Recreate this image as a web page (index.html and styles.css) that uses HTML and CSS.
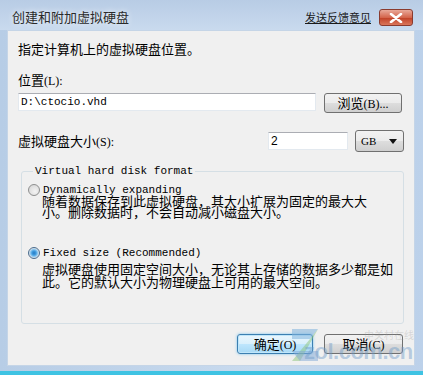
FILE: index.html
```html
<!DOCTYPE html>
<html lang="zh-CN">
<head>
    <meta charset="UTF-8" />
    <title>创建和附加虚拟硬盘</title>
    <link rel="stylesheet" href="styles.css">
</head>
<body>
    <div class="ventana">
        <div class="barra">
            <span class="titulo">创建和附加虚拟硬盘</span>
            <a class="opinion">发送反馈意见</a>
            <span class="cerrar">
                <svg width="14" height="10" viewBox="0 0 14 10">
                    <path d="M2 1 L12 9 M12 1 L2 9" stroke="#fff" stroke-width="2.6" stroke-linecap="round"/>
                </svg>
            </span>
        </div>

        <div class="cliente">
            <p class="intro">指定计算机上的虚拟硬盘位置。</p>

            <label class="etiqueta" for="ruta">位置<span class="tecla">(L):</span></label>
            <div class="fila-ruta">
                <div class="caja ruta" id="ruta">D:\ctocio.vhd</div>
                <button class="boton examinar">浏览<span class="tecla">(B)...</span></button>
            </div>

            <div class="fila-tamano">
                <span class="etiqueta">虚拟硬盘大小<span class="tecla">(S):</span></span>
                <div class="caja tamano">2</div>
                <div class="combo">
                    <span class="tecla">GB</span>
                    <svg width="8" height="5" viewBox="0 0 8 5"><path d="M0 0 H8 L4 5 Z" fill="#111"/></svg>
                </div>
            </div>

            <fieldset class="grupo">
                <legend>Virtual hard disk format</legend>
                <div class="opcion"><span class="radio"></span>Dynamically expanding</div>
                <p class="desc uno">随着数据保存到此虚拟硬盘，其大小扩展为固定的最大大<br>小。删除数据时，不会自动减小磁盘大小。</p>
                <div class="opcion segunda"><span class="radio marcado"></span>Fixed size (Recommended)</div>
                <p class="desc dos">虚拟硬盘使用固定空间大小，无论其上存储的数据多少都是如<br>此。它的默认大小为物理硬盘上可用的最大空间。</p>
            </fieldset>

            <div class="acciones">
                <button class="boton principal">确定<span class="tecla">(O)</span></button>
                <button class="boton cancelar">取消<span class="tecla">(C)</span></button>
            </div>
        </div>

        <div class="marca">
            <svg class="logo-z" width="30" height="36" viewBox="0 0 30 36">
                <polygon points="2,2 28,2 20,12 2,12" fill="#7fb2dd" opacity="0.55"/>
                <polygon points="20,12 28,2 10,34 2,34" fill="#8cc47a" opacity="0.5"/>
                <polygon points="2,24 28,24 28,34 10,34" fill="#7fa8d6" opacity="0.5"/>
            </svg>
            <span class="marca-cn">中关村在线</span>
            <span class="marca-url">zol.com.cn</span>
        </div>
    </div>
</body>
</html>
```

FILE: styles.css
```css
body {
    margin: 0;
    padding: 0;
    font-family: "Noto Sans CJK SC", sans-serif;
    font-size: 13px;
    color: #000;
}

.ventana {
    position: relative;
    width: 423px;
    height: 375px;
    box-sizing: border-box;
    display: flex;
    flex-direction: column;
    background: linear-gradient(to right, #b7cde6, #c8daee 60%, #bcd1ea);
    padding-bottom: 5px;
    border-bottom: 4px solid #3fc3e3;
    overflow: hidden;
}

/* barra de titulo */
.barra {
    height: 30px;
    display: flex;
    align-items: flex-start;
    padding: 9px 10px 0 12px;
    box-sizing: border-box;
    background: linear-gradient(to bottom, #b8cce5, #c9daee);
}
.titulo {
    flex: 1;
    line-height: 16px;
    color: #2a2a2a;
    text-shadow: 0 0 6px #fff;
}
.opinion {
    font-size: 11px;
    line-height: 16px;
    margin-right: 8px;
    color: #1a1a1a;
    text-decoration: underline;
}
.cerrar {
    width: 34px;
    height: 17px;
    box-sizing: border-box;
    border: 1px solid #8a3b2f;
    border-radius: 3px;
    background: linear-gradient(to bottom, #e9a99a, #d4654c 50%, #c2442a 55%, #d9765b);
    display: flex;
    justify-content: center;
    align-items: center;
}

/* area de cliente */
.cliente {
    flex: 1;
    margin: 0 8px 0 7px;
    background: #f0f0f0;
    border: 1px solid #c5d5e7;
    padding: 10px 11px 0 10px;
    box-sizing: border-box;
}
.intro {
    margin: 0;
    line-height: 16px;
}
.etiqueta {
    display: block;
    margin-top: 15px;
    line-height: 16px;
}
.tecla {
    font-family: "Liberation Serif", "Noto Sans CJK SC", serif;
    font-size: 12px;
}

.fila-ruta {
    display: flex;
    align-items: flex-start;
    gap: 8px;
    margin-top: 4px;
    margin-right: 1px;
}
.caja {
    height: 18px;
    box-sizing: border-box;
    background: #fff;
    border: 1px solid #e3e9ef;
    border-top-color: #abadb3;
    line-height: 16px;
    padding-left: 2px;
}
.ruta {
    width: 299px;
    font-family: "Liberation Mono", monospace;
    font-size: 11px;
}
.boton {
    height: 20px;
    padding: 0;
    box-sizing: border-box;
    border: 1px solid #707070;
    border-radius: 3px;
    background: linear-gradient(to bottom, #f2f2f2, #ebebeb 50%, #dddddd 51%, #cfcfcf);
    font-family: "Noto Sans CJK SC", sans-serif;
    font-size: 13px;
    line-height: 17px;
    color: #000;
}
.examinar {
    width: 78px;
}

.fila-tamano {
    display: flex;
    align-items: center;
    height: 22px;
    margin-top: 17px;
    margin-right: -1px;
}
.fila-tamano .etiqueta {
    flex: 1;
    margin: 0;
}
.tamano {
    width: 80px;
    margin-right: 7px;
    font-family: "Liberation Sans", sans-serif;
    font-size: 12px;
}
.combo {
    width: 49px;
    height: 22px;
    box-sizing: border-box;
    border: 1px solid #707070;
    border-radius: 3px;
    background: linear-gradient(to bottom, #f2f2f2, #ebebeb 50%, #dddddd 51%, #cfcfcf);
    display: flex;
    justify-content: space-between;
    align-items: center;
    padding: 0 6px 0 5px;
}
.combo .tecla {
    font-size: 11px;
}

/* grupo de formato */
.grupo {
    margin: 12px 0 0 3px;
    width: 383px;
    box-sizing: border-box;
    border: 1px solid #d5dfe5;
    border-radius: 3px;
    padding: 5px 0 35px 6px;
    min-width: 0;
}
.grupo legend {
    margin-left: 5px;
    padding: 0 2px;
    font-family: "Liberation Mono", monospace;
    font-size: 11px;
    line-height: 14px;
}
.opcion {
    display: flex;
    align-items: center;
    height: 14px;
    font-family: "Liberation Mono", monospace;
    font-size: 11px;
}
.segunda {
    margin-top: 29px;
}
.radio {
    width: 12px;
    height: 12px;
    box-sizing: border-box;
    border-radius: 50%;
    border: 1px solid #8e8f8f;
    background: radial-gradient(circle at 60% 65%, #f4f4f4, #d2d2d2);
    margin-right: 3px;
}
.radio.marcado {
    border-color: #4b6c8d;
    background: radial-gradient(circle, #2b7ac0 0, #3d9be0 2px, #a2d1f2 4px, #e8e8e8 5px);
}
.desc {
    margin: 0 0 0 14px;
}
.desc.uno {
    margin-top: -2px;
    line-height: 11px;
}
.desc.dos {
    margin-top: 2px;
    line-height: 13px;
}

.acciones {
    display: flex;
    justify-content: flex-end;
    gap: 11px;
    margin-top: 10px;
}
.principal {
    width: 76px;
    border-color: #3c7fb1;
    background: linear-gradient(to bottom, #eaf6fd, #d9f0fc 50%, #bee6fd 51%, #a7d9f5);
    box-shadow: 0 0 3px #7ac4ee, inset 0 0 0 1px #c0e6fa;
}
.cancelar {
    width: 79px;
}

/* marca de agua */
.marca {
    position: absolute;
    right: 0;
    bottom: 6px;
    width: 135px;
    height: 40px;
    pointer-events: none;
}
.logo-z {
    position: absolute;
    left: 2px;
    top: 2px;
}
.marca-cn {
    position: absolute;
    left: 76px;
    top: 5px;
    font-size: 10px;
    line-height: 10px;
    color: rgba(150, 150, 150, 0.3);
}
.marca-url {
    position: absolute;
    left: 16px;
    top: 20px;
    font-family: "Liberation Sans", sans-serif;
    font-weight: bold;
    font-size: 22px;
    line-height: 14px;
    letter-spacing: -0.5px;
    color: rgba(110, 155, 200, 0.45);
}
```
